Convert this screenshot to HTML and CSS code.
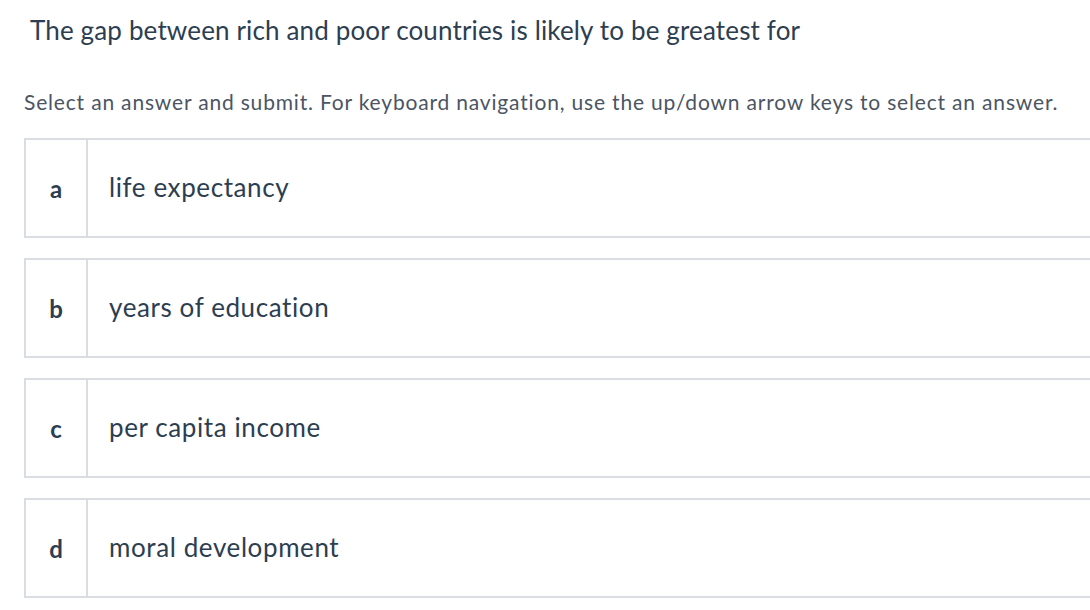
FILE: index.html
```html
<!DOCTYPE html>
<html>
<head>
<meta charset="utf-8">
<link rel="stylesheet" href="styles.css">
</head>
<body>
<div class="page">
  <h1 class="question">The gap between rich and poor countries is likely to be greatest for</h1>
  <p class="instructions">Select an answer and submit. For keyboard navigation, use the up/down arrow keys to select an answer.</p>
  <div class="options">
    <div class="option"><div class="letter">a</div><div class="text">life expectancy</div></div>
    <div class="option"><div class="letter">b</div><div class="text">years of education</div></div>
    <div class="option"><div class="letter">c</div><div class="text">per capita income</div></div>
    <div class="option"><div class="letter">d</div><div class="text">moral development</div></div>
  </div>
</div>
</body>
</html>
```
FILE: styles.css
```css
html, body {
  margin: 0;
  padding: 0;
  background: #ffffff;
}
body {
  font-family: Lato, "Open Sans", sans-serif;
  overflow: hidden;
}
.page {
  padding-left: 24px;
  width: 1080px;
}
.question {
  margin: 0;
  padding: 14px 0 0 6px;
  font-size: 26px;
  font-weight: 400;
  line-height: 32px;
  letter-spacing: 0.15px;
  color: #2c3e50;
}
.instructions {
  margin: 0;
  padding-top: 42px;
  font-size: 21px;
  line-height: 28px;
  letter-spacing: 0.82px;
  color: #4b5563;
  white-space: nowrap;
}
.options {
  margin-top: 22px;
  display: flex;
  flex-direction: column;
  gap: 20px;
}
.option {
  display: flex;
  height: 96px;
  border: 2px solid #dadee3;
  border-right: none;
}
.letter {
  width: 60px;
  border-right: 2px solid #dadee3;
  display: flex;
  align-items: center;
  justify-content: center;
  font-size: 24px;
  font-weight: 700;
  color: #2c3e50;
}
.text {
  display: flex;
  align-items: center;
  padding-left: 21px;
  padding-bottom: 3px;
  font-size: 26px;
  letter-spacing: 0.6px;
  color: #2c3e50;
}
```
